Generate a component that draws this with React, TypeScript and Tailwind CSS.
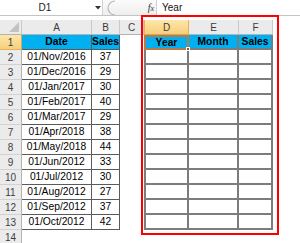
import React from 'react';

const data: [string, number][] = [
  ['01/Nov/2016', 37],
  ['01/Dec/2016', 29],
  ['01/Jan/2017', 30],
  ['01/Feb/2017', 40],
  ['01/Mar/2017', 29],
  ['01/Apr/2018', 38],
  ['01/May/2018', 44],
  ['01/Jun/2012', 33],
  ['01/Jul/2012', 30],
  ['01/Aug/2012', 27],
  ['01/Sep/2012', 37],
  ['01/Oct/2012', 42],
];

const colHdr =
  'flex items-center justify-center bg-[#ebebeb] border-r border-b border-r-[#c9c9c9] border-b-[#b3b3b3] text-[10px] text-[#3d3d3d]';
const rowHdr =
  'flex items-center justify-center bg-[#ebebeb] border-r border-b border-r-[#b3b3b3] border-b-[#d2d2d2] text-[10px] text-[#3d3d3d]';
const ab = 'flex items-center justify-center border-r border-b border-[#5a5a5a] text-[10.3px] text-black';
const gridD = 'border-l-2 border-r-2 border-b-2 border-[#7c7c7c]';
const gridEF = 'border-r-2 border-b-2 border-[#7c7c7c]';
const blue = 'bg-[#00b0f0] font-bold text-[10.3px] text-black flex items-center justify-center';

export default function App() {
  return (
    <div className="relative w-[300px] h-[243px] bg-white overflow-hidden font-['Liberation_Sans',Arial,sans-serif]">
      {/* formula bar */}
      <div className="flex h-[16px] border-b border-[#c4c4c4] bg-white">
        <div className="relative w-[103px] h-full flex items-center border-r border-[#d0d0d0]">
          <div className="w-[90px] text-center text-[10px] text-[#222]">D1</div>
          <svg width="6" height="4" viewBox="0 0 6 4" className="absolute left-[95px] top-[6px]">
            <path d="M0 0 L6 0 L3 3.5 Z" fill="#333" />
          </svg>
        </div>
        <div className="w-[54px] h-full flex items-center bg-gradient-to-b from-[#fbfbfb] to-[#eeeeee] border-r border-[#d0d0d0]">
          <svg width="12" height="16" viewBox="0 0 12 16" className="ml-[3px]">
            <path d="M9 1 A7 7 0 0 0 9 15" fill="none" stroke="#b9b9b9" strokeWidth="1.2" />
          </svg>
          <div className="ml-auto mr-[2px] italic text-[10px] text-[#333] font-['Liberation_Serif',serif] leading-none">
            f<span className="text-[8px]">x</span>
          </div>
        </div>
        <div className="flex-1 flex items-center pl-[5px] text-[10px] text-[#111]">Year</div>
      </div>
      <div className="h-[4px]" />

      {/* sheet grid */}
      <div className="grid w-[273px] grid-cols-[22px_70px_28px_24px_45px_50px_34px] auto-rows-[15px]">
        {/* header row */}
        <div className="relative bg-[#ebebeb] border-r border-b border-r-[#c9c9c9] border-b-[#b3b3b3]">
          <svg width="10" height="10" viewBox="0 0 10 10" className="absolute right-[2px] bottom-[2px]">
            <path d="M10 0 L10 10 L0 10 Z" fill="#c3c3c3" />
          </svg>
        </div>
        <div className={colHdr}>A</div>
        <div className={colHdr}>B</div>
        <div className={colHdr}>C</div>
        <div className="flex items-center justify-center bg-gradient-to-b from-[#fde7a9] to-[#f6cf7c] border-r border-b border-r-[#e4b25f] border-b-[#dba654] border-l border-l-[#e4b25f] text-[10px] text-[#3d3d3d]">
          D
        </div>
        <div className={colHdr}>E</div>
        <div className={colHdr}>F</div>

        {/* row 1 */}
        <div className="flex items-center justify-center bg-gradient-to-b from-[#fde7a9] to-[#f6cf7c] border-r border-b border-r-[#dba654] border-b-[#e4b25f] text-[10px] text-[#3d3d3d]">
          1
        </div>
        <div className={`${blue} border-r border-b border-[#5a5a5a]`}>Date</div>
        <div className={`${blue} border-r border-b border-[#5a5a5a]`}>Sales</div>
        <div />
        <div className={`${blue} relative border-2 border-[#b47c4c]`}>
          Year
          <div className="absolute right-[-3px] bottom-[-3px] w-[4px] h-[4px] bg-[#7d5a3a] border border-white" />
        </div>
        <div className={`${blue} ${gridEF}`}>Month</div>
        <div className={`${blue} ${gridEF}`}>Sales</div>

        {data.map(([d, s], i) => (
          <React.Fragment key={i}>
            <div className={rowHdr}>{i + 2}</div>
            <div className={ab}>{d}</div>
            <div className={ab}>{s}</div>
            <div />
            <div className={gridD} />
            <div className={gridEF} />
            <div className={gridEF} />
          </React.Fragment>
        ))}

        {/* row 14 */}
        <div className={rowHdr}>14</div>
        <div />
        <div />
        <div />
        <div />
        <div />
        <div />
      </div>

      {/* red highlight rectangle */}
      <div className="absolute left-[141px] top-[15px] w-[138px] h-[220px] border-2 border-[#ff0000]" />
    </div>
  );
}
